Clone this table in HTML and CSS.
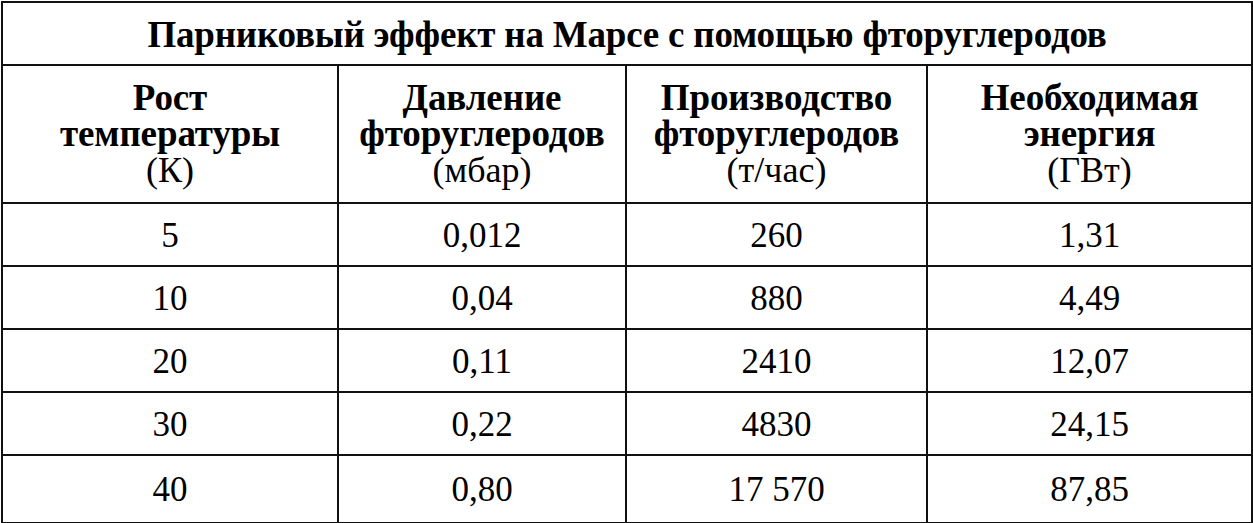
FILE: index.html
```html
<!DOCTYPE html>
<html lang="ru">
<head>
<meta charset="utf-8">
<link rel="stylesheet" href="styles.css">
</head>
<body>
<table class="tbl">
  <colgroup>
    <col class="c1"><col class="c2"><col class="c3"><col class="c4">
  </colgroup>
  <tr class="title-row"><th colspan="4" class="title">Парниковый эффект на Марсе с помощью фторуглеродов</th></tr>
  <tr class="head-row">
    <th><span class="hb">Рост<br>температуры</span><br><span class="unit">(К)</span></th>
    <th><span class="hb">Давление<br>фторуглеродов</span><br><span class="unit">(мбар)</span></th>
    <th><span class="hb">Производство<br>фторуглеродов</span><br><span class="unit">(т/час)</span></th>
    <th><span class="hb">Необходимая<br>энергия</span><br><span class="unit">(ГВт)</span></th>
  </tr>
  <tr class="row"><td>5</td><td>0,012</td><td>260</td><td>1,31</td></tr>
  <tr class="row"><td>10</td><td>0,04</td><td>880</td><td>4,49</td></tr>
  <tr class="row"><td>20</td><td>0,11</td><td>2410</td><td>12,07</td></tr>
  <tr class="row"><td>30</td><td>0,22</td><td>4830</td><td>24,15</td></tr>
  <tr class="row last"><td>40</td><td>0,80</td><td>17 570</td><td>87,85</td></tr>
</table>
</body>
</html>
```
FILE: styles.css
```css
html, body {
  margin: 0;
  padding: 0;
  background: #ffffff;
}
body {
  padding: 1px 0 0 1px;
  color: #000;
}
.tbl {
  border-collapse: collapse;
  table-layout: fixed;
  width: 1250px;
}
.c1 { width: 336px; }
.c2 { width: 288px; }
.c3 { width: 301px; }
.c4 { width: 325px; }
.tbl th, .tbl td {
  font-family: "Liberation Serif", serif;
  border: 2px solid #111;
  text-align: center;
  vertical-align: middle;
  padding: 0;
  font-weight: normal;
}
.title-row { height: 63px; }
.tbl .title {
  font-size: 37px;
  font-weight: bold;
  letter-spacing: -0.2px;
  padding-top: 2px;
}
.head-row { height: 138px; }
.head-row th {
  font-size: 37px;
  line-height: 36px;
  padding-bottom: 1px;
}
.hb {
  font-weight: bold;
  letter-spacing: -0.1px;
}
.unit {
  font-size: 36px;
}
.row { height: 63px; }
.row.last { height: 68px; }
.row td {
  font-size: 35px;
  padding-top: 2px;
}
```
